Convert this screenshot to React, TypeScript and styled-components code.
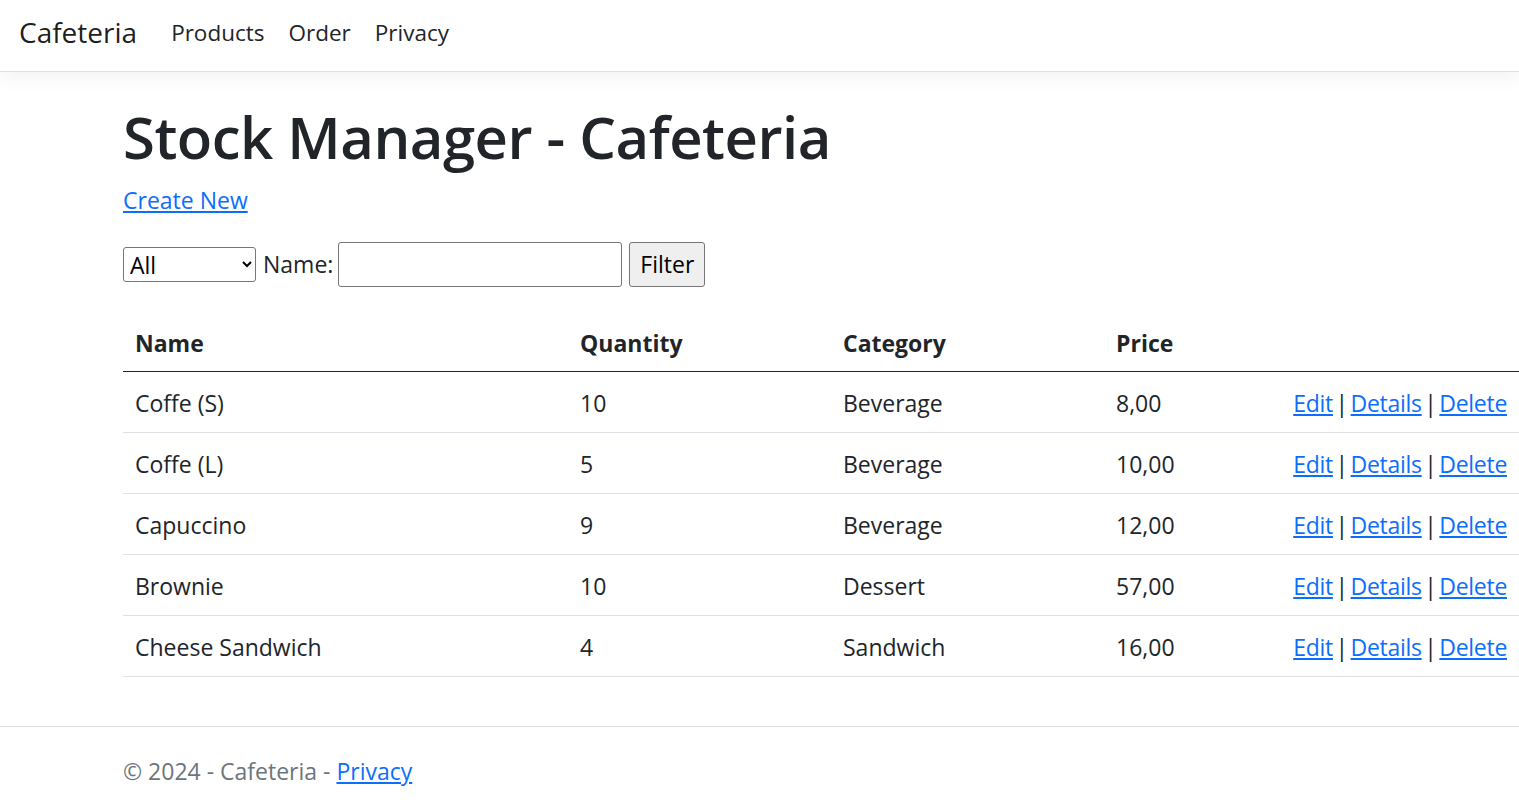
import React from "react";
import styled, { createGlobalStyle } from "styled-components";

const GlobalStyle = createGlobalStyle`
  html, body {
    margin: 0;
    padding: 0;
    background: #fff;
    overflow: hidden;
  }
  body {
    font-family: "Open Sans", "Noto Sans", sans-serif;
    font-size: 23px;
    color: #212529;
  }
`;

const Page = styled.div`
  display: flex;
  flex-direction: column;
  min-height: 807px;
  width: 1519px;
`;

const NavBar = styled.header`
  display: flex;
  align-items: center;
  height: 72px;
  padding: 0 19px 7px;
  box-sizing: border-box;
  border-bottom: 1px solid #dee2e6;
  box-shadow: 0 6px 18px rgba(0, 0, 0, 0.05);
`;

const Brand = styled.a`
  font-size: 28px;
  color: rgba(0, 0, 0, 0.9);
  text-decoration: none;
  margin-right: 22px;
`;

const NavLinks = styled.nav`
  display: flex;
  font-size: 22.5px;
`;

const NavLink = styled.a`
  padding: 0 12px;
  color: #212529;
  text-decoration: none;
`;

const Main = styled.main`
  padding: 24px 0 0 123px;
  flex: 1;
`;

const Title = styled.h1`
  font-size: 58px;
  font-weight: 600;
  margin: 6px 0 12px;
  line-height: 1.2;
  letter-spacing: -0.5px;
`;

const Link = styled.a`
  color: #0d6efd;
  text-decoration: underline;
  cursor: pointer;
`;

const CreateLine = styled.p`
  margin: 0 0 26px;
`;

const FilterForm = styled.form`
  display: flex;
  align-items: center;
  gap: 7px;
  margin-bottom: 28px;
`;

const Select = styled.select`
  width: 133px;
  height: 35px;
  margin-top: 1px;
  font-family: inherit;
  font-size: 23px;
  border: 1px solid #767676;
  border-radius: 3px;
  background: #fff;
  color: #000;
  padding: 0 2px;
`;

const Input = styled.input`
  width: 284px;
  height: 45px;
  margin-left: -2px;
  box-sizing: border-box;
  border: 1px solid #767676;
  border-radius: 3px;
  font-size: 23px;
`;

const Button = styled.button`
  height: 45px;
  padding: 0 10px;
  font-family: inherit;
  font-size: 23px;
  color: #000;
  background: #efefef;
  border: 1px solid #767676;
  border-radius: 3px;
`;

const Table = styled.table`
  width: 1396px;
  border-collapse: collapse;
`;

const HeadCell = styled.th<{ $w?: number }>`
  text-align: left;
  font-weight: 700;
  padding: 12px 12px;
  height: 56px;
  box-sizing: border-box;
  border-bottom: 1px solid #212529;
  width: ${(p) => (p.$w ? `${p.$w}px` : "auto")};
`;

const Cell = styled.td<{ $actions?: boolean }>`
  padding: 2px 12px 0;
  height: 58px;
  border-bottom: 1px solid #dee2e6;
  white-space: nowrap;
  text-align: ${(p) => (p.$actions ? "right" : "left")};
  word-spacing: ${(p) => (p.$actions ? "-3px" : "normal")};
  letter-spacing: ${(p) => (p.$actions ? "-0.3px" : "normal")};
`;

const Footer = styled.footer`
  border-top: 1px solid #dee2e6;
  padding: 8px 0 0 123px;
  height: 81px;
  box-sizing: border-box;
  display: flex;
  align-items: center;
  color: #6c757d;
`;

const rows = [
  { name: "Coffe (S)", qty: 10, cat: "Beverage", price: "8,00" },
  { name: "Coffe (L)", qty: 5, cat: "Beverage", price: "10,00" },
  { name: "Capuccino", qty: 9, cat: "Beverage", price: "12,00" },
  { name: "Brownie", qty: 10, cat: "Dessert", price: "57,00" },
  { name: "Cheese Sandwich", qty: 4, cat: "Sandwich", price: "16,00" },
];

export default function App() {
  return (
    <Page>
      <GlobalStyle />
      <NavBar>
        <Brand>Cafeteria</Brand>
        <NavLinks>
          <NavLink>Products</NavLink>
          <NavLink>Order</NavLink>
          <NavLink>Privacy</NavLink>
        </NavLinks>
      </NavBar>
      <Main>
        <Title>Stock Manager - Cafeteria</Title>
        <CreateLine>
          <Link>Create New</Link>
        </CreateLine>
        <FilterForm onSubmit={(e) => e.preventDefault()}>
          <Select defaultValue="All">
            <option>All</option>
            <option>Beverage</option>
            <option>Dessert</option>
            <option>Sandwich</option>
          </Select>
          <span>Name:</span>
          <Input type="text" />
          <Button type="submit">Filter</Button>
        </FilterForm>
        <Table>
          <thead>
            <tr>
              <HeadCell $w={445}>Name</HeadCell>
              <HeadCell $w={263}>Quantity</HeadCell>
              <HeadCell $w={273}>Category</HeadCell>
              <HeadCell>Price</HeadCell>
              <HeadCell $w={241} />
            </tr>
          </thead>
          <tbody>
            {rows.map((r) => (
              <tr key={r.name}>
                <Cell>{r.name}</Cell>
                <Cell>{r.qty}</Cell>
                <Cell>{r.cat}</Cell>
                <Cell>{r.price}</Cell>
                <Cell $actions>
                  <Link>Edit</Link> | <Link>Details</Link> | <Link>Delete</Link>
                </Cell>
              </tr>
            ))}
          </tbody>
        </Table>
      </Main>
      <Footer>
        <span>
          © 2024 - Cafeteria - <Link>Privacy</Link>
        </span>
      </Footer>
    </Page>
  );
}
